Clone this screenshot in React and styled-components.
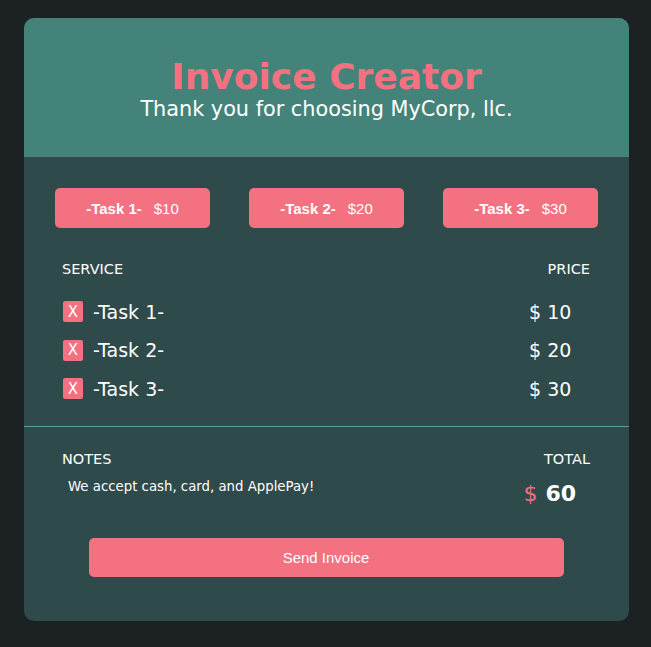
import React from "react"
import styled, { createGlobalStyle } from "styled-components"

const GlobalStyle = createGlobalStyle`
  html, body {
    margin: 0;
    padding: 0;
    background: #1c2224;
  }
  body {
    font-family: "DejaVu Sans", Verdana, sans-serif;
  }
`

const Page = styled.div`
  padding: 18px 22px 26px 24px;
`

const Card = styled.div`
  width: 605px;
  height: 603px;
  border-radius: 10px;
  overflow: hidden;
  background: #2f4a4b;
  display: flex;
  flex-direction: column;
`

const Header = styled.header`
  background: #44837a;
  height: 139px;
  display: flex;
  flex-direction: column;
  align-items: center;
  justify-content: center;
  padding-top: 2px;
  box-sizing: border-box;
`

const Title = styled.h1`
  margin: 0;
  color: #f37180;
  font-size: 36px;
  font-weight: bold;
  line-height: 40px;
`

const Subtitle = styled.p`
  margin: 0;
  color: #fff;
  font-size: 20.8px;
  line-height: 24px;
`

const TaskBar = styled.div`
  display: flex;
  justify-content: space-between;
  padding: 31px 31px 0;
`

const TaskButton = styled.button`
  width: 155px;
  height: 40px;
  border: none;
  border-radius: 5px;
  background: #f37180;
  color: #fff;
  font-family: "Liberation Sans", Arial, sans-serif;
  font-size: 15px;
  display: flex;
  align-items: center;
  justify-content: center;
  gap: 12px;

  b {
    font-weight: bold;
  }
`

const Section = styled.section`
  padding: 0 39px 0 38px;
`

const HeadRow = styled.div`
  display: flex;
  justify-content: space-between;
  color: #fff;
  font-size: 14.5px;
  line-height: 16px;
  margin-top: ${props => props.top || "33px"};
`

const ItemList = styled.ul`
  list-style: none;
  margin: 24px 0 0;
  padding: 0;
  display: flex;
  flex-direction: column;
  gap: 17.5px;
`

const Item = styled.li`
  display: flex;
  align-items: center;
  height: 21px;
  color: #fff;
  font-size: 19px;
`

const Remove = styled.button`
  width: 20px;
  height: 21px;
  padding: 0;
  margin: 0 10px 0 1px;
  border: none;
  border-radius: 2px;
  background: #f37180;
  color: #fff;
  font-family: "DejaVu Sans", Verdana, sans-serif;
  font-size: 15px;
  display: flex;
  align-items: center;
  justify-content: center;
`

const Name = styled.span`
  flex: 1;
`

const Price = styled.span`
  width: 61px;
`

const Divider = styled.hr`
  margin: 27px 0 0;
  border: none;
  border-top: 1px solid #5a9c91;
`

const NotesRow = styled.div`
  display: flex;
  justify-content: space-between;
  align-items: flex-start;
  margin-top: 12px;
`

const Note = styled.p`
  margin: 0 0 0 6px;
  color: #fff;
  font-size: 13.3px;
`

const Total = styled.div`
  color: #fff;
  font-size: 22px;
  font-weight: bold;
  margin-top: 2px;
  margin-right: 14px;

  span {
    color: #f37180;
    font-weight: normal;
    margin-right: 8px;
  }
`

const SendButton = styled.button`
  display: block;
  width: 475px;
  height: 39px;
  margin: 32px auto 0;
  border: none;
  border-radius: 5px;
  background: #f37180;
  color: #fff;
  font-family: "Liberation Sans", Arial, sans-serif;
  font-size: 15px;
`

const tasks = [
  { name: "-Task 1-", price: 10 },
  { name: "-Task 2-", price: 20 },
  { name: "-Task 3-", price: 30 },
]

const App = () => {
  const total = tasks.reduce((sum, t) => sum + t.price, 0)

  return (
    <Page>
      <GlobalStyle />
      <Card>
        <Header>
          <Title>Invoice Creator</Title>
          <Subtitle>Thank you for choosing MyCorp, llc.</Subtitle>
        </Header>

        <TaskBar>
          {tasks.map(t => (
            <TaskButton key={t.name}>
              <b>{t.name}</b>
              <span>${t.price}</span>
            </TaskButton>
          ))}
        </TaskBar>

        <Section>
          <HeadRow>
            <span>SERVICE</span>
            <span>PRICE</span>
          </HeadRow>
          <ItemList>
            {tasks.map(t => (
              <Item key={t.name}>
                <Remove>X</Remove>
                <Name>{t.name}</Name>
                <Price>$ {t.price}</Price>
              </Item>
            ))}
          </ItemList>
        </Section>

        <Divider />

        <Section>
          <HeadRow top="24px">
            <span>NOTES</span>
            <span>TOTAL</span>
          </HeadRow>
          <NotesRow>
            <Note>We accept cash, card, and ApplePay!</Note>
            <Total>
              <span>$</span>
              {total}
            </Total>
          </NotesRow>
          <SendButton>Send Invoice</SendButton>
        </Section>
      </Card>
    </Page>
  )
}

export default App
